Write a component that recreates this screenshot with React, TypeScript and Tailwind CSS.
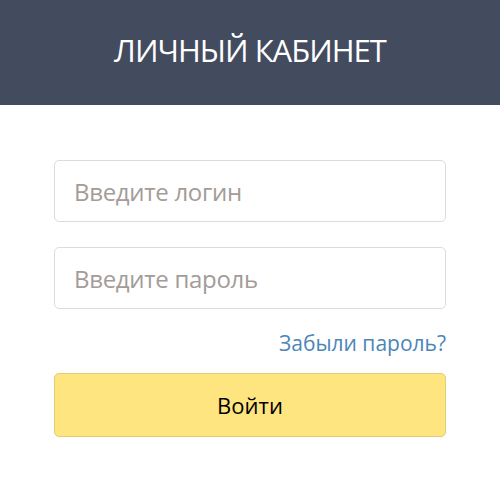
export default function App() {
  return (
    <div className="w-[500px] h-[483px] bg-white" style={{ fontFamily: '"Open Sans", "Noto Sans", sans-serif' }}>
      <header className="h-[105px] bg-[#434b5e] flex items-center justify-center">
        <h1 className="text-white text-[31px] font-normal tracking-[-1px] leading-none -mt-[4px]">ЛИЧНЫЙ КАБИНЕТ</h1>
      </header>
      <form className="px-[54px] pt-[55px] flex flex-col" onSubmit={(e) => e.preventDefault()}>
        <input
          type="text"
          placeholder="Введите логин"
          className="h-[62px] w-full rounded-[5px] border border-[#dcdcdc] px-[19px] text-[24px] tracking-[-0.3px] text-[#333] placeholder:text-[#a39c98] outline-none"
        />
        <input
          type="password"
          placeholder="Введите пароль"
          className="mt-[25px] h-[62px] w-full rounded-[5px] border border-[#dcdcdc] px-[19px] text-[24px] tracking-[-0.3px] text-[#333] placeholder:text-[#a39c98] outline-none"
        />
        <div className="mt-[20px] flex justify-end">
          <a href="#" className="text-[21px] leading-[28px] text-[#4a86b8]">
            Забыли пароль?
          </a>
        </div>
        <button
          type="submit"
          className="mt-[16px] h-[64px] w-full rounded-[5px] border border-[#e3cc73] bg-[#ffe580] text-[22px] text-black"
        >
          Войти
        </button>
      </form>
    </div>
  );
}
